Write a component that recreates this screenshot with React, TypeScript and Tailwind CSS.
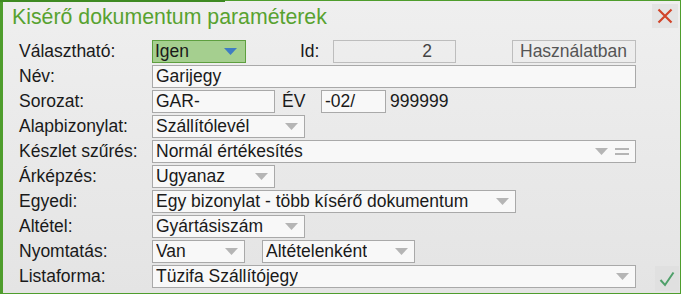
import React from "react";

const Arrow = ({ blue = false }: { blue?: boolean }) => (
  <svg width="13" height="7" viewBox="0 0 13 7" className="shrink-0">
    <polygon points="0,0 13,0 6.5,7" fill={blue ? "#3f7cc2" : "#b5b5b5"} />
  </svg>
);

const Select = ({ value, w, extra = false }: { value: string; w: string; extra?: boolean }) => (
  <div className={`${w} h-[23px] flex items-center justify-between border border-[#a9a9a9] bg-[#f8f8f8] pl-[3px] pr-[6px]`}>
    <span className="truncate">{value}</span>
    <div className="flex items-center gap-[7px]">
      <Arrow />
      {extra && (
        <div className="flex flex-col gap-[3px]">
          <div className="w-[14px] h-[2px] bg-[#b5b5b5]"></div>
          <div className="w-[14px] h-[2px] bg-[#b5b5b5]"></div>
        </div>
      )}
    </div>
  </div>
);

const Input = ({ value, w }: { value: string; w: string }) => (
  <div className={`${w} h-[23px] flex items-center border border-[#a9a9a9] bg-[#f8f8f8] pl-[3px]`}>{value}</div>
);

const Row = ({ label, children }: { label: string; children: React.ReactNode }) => (
  <div className="flex items-center h-[23px]">
    <div className="w-[133px] shrink-0">{label}</div>
    <div className="flex items-center">{children}</div>
  </div>
);

export default function App() {
  return (
    <div className="w-[682px] h-[295px] bg-white relative overflow-hidden" style={{ fontFamily: '"Liberation Sans", Arial, sans-serif' }}>
      {/* dialog */}
      <div className="w-[681px] h-[294px] border-l-[3px] border-t border-r border-b border-[#4f9d2d] bg-gradient-to-b from-[#efefef] to-[#e4e4e4] text-[17.5px] text-[#1a1a1a] relative">
        <div className="absolute -top-px -left-[3px] w-[225px] h-[2px] bg-[#3f8a22]"></div>
        <div className="flex items-start justify-between pl-[9px] pr-[2px] pt-[3px]">
          <div className="text-[21.3px] text-[#58a230] leading-[26px]">Kisérő dokumentum paraméterek</div>
          <button className="w-[26px] h-[24px] flex items-center justify-center bg-[#e4e4e4]">
            <svg width="16" height="16" viewBox="0 0 16 16">
              <path d="M1.5 1.5 L14.5 14.5 M14.5 1.5 L1.5 14.5" stroke="#d2452a" strokeWidth="2.2" />
            </svg>
          </button>
        </div>

        <div className="flex flex-col gap-[2px] pl-[16px] mt-[10px]">
          <Row label="Választható:">
            <div className="w-[94px] h-[23px] flex items-center justify-between border border-[#5e9f3f] bg-[#a5cf8f] pl-[2px] pr-[8px]">
              <span>Igen</span>
              <Arrow blue />
            </div>
            <span className="ml-[54px] w-[33px]">Id:</span>
            <div className="w-[123px] h-[23px] flex items-center justify-end border border-[#bdbdbd] pr-[23px] text-[#444]">2</div>
            <div className="ml-[56px] w-[124px] h-[23px] flex items-center border border-[#bdbdbd] pl-[7px] text-[#555]">Használatban</div>
          </Row>
          <Row label="Név:">
            <Input value="Garijegy" w="w-[484px]" />
          </Row>
          <Row label="Sorozat:">
            <Input value="GAR-" w="w-[123px]" />
            <span className="ml-[7px] w-[39px]">ÉV</span>
            <Input value="-02/" w="w-[65px]" />
            <span className="ml-[4px]">999999</span>
          </Row>
          <Row label="Alapbizonylat:">
            <Select value="Szállítólevél" w="w-[153px]" />
          </Row>
          <Row label="Készlet szűrés:">
            <Select value="Normál értékesítés" w="w-[484px]" extra />
          </Row>
          <Row label="Árképzés:">
            <Select value="Ugyanaz" w="w-[123px]" />
          </Row>
          <Row label="Egyedi:">
            <Select value="Egy bizonylat - több kísérő dokumentum" w="w-[364px]" />
          </Row>
          <Row label="Altétel:">
            <Select value="Gyártásiszám" w="w-[153px]" />
          </Row>
          <Row label="Nyomtatás:">
            <Select value="Van" w="w-[93px]" />
            <div className="ml-[17px]">
              <Select value="Altételenként" w="w-[153px]" />
            </div>
          </Row>
          <div className="flex items-start h-[23px]">
            <Row label="Listaforma:">
              <Select value="Tüzifa Szállítójegy" w="w-[484px]" />
            </Row>
            <button className="ml-[19px] mt-[1px] w-[24px] h-[25px] shrink-0 flex items-center justify-center bg-[#e0e0e0]">
              <svg width="16" height="16" viewBox="0 0 16 16">
                <path d="M1.5 9 L6 14 L14.5 1.5" stroke="#4fa06a" strokeWidth="2" fill="none" />
              </svg>
            </button>
          </div>
        </div>
      </div>
    </div>
  );
}
